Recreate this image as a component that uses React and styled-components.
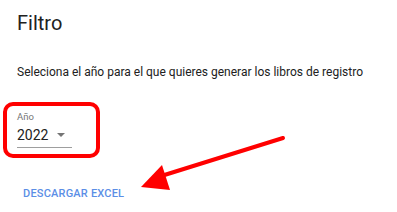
import React from "react";
import styled, { createGlobalStyle } from "styled-components";

const GlobalStyle = createGlobalStyle`
  html, body {
    margin: 0;
    padding: 0;
    background: #ffffff;
  }
  body {
    font-family: Roboto, "Liberation Sans", sans-serif;
  }
`;

const Page = styled.div`
  position: relative;
  width: 397px;
  height: 212px;
  overflow: hidden;
  box-sizing: border-box;
  padding: 12px 17px 0 17px;
  display: flex;
  flex-direction: column;
  font-family: Roboto, "Liberation Sans", sans-serif;
`;

const Title = styled.h2`
  margin: 0;
  font-size: 20px;
  font-weight: 400;
  line-height: 22px;
  color: #212121;
`;

const Description = styled.p`
  margin: 30px 0 0 0;
  font-size: 12px;
  line-height: 16px;
  color: #212121;
`;

const FieldWrap = styled.div`
  position: relative;
  margin-top: 31px;
  width: 55px;
`;

const Highlight = styled.div`
  position: absolute;
  left: -14px;
  top: -9px;
  width: 97px;
  height: 56px;
  box-sizing: border-box;
  border: 4px solid #ff0000;
  border-radius: 10px;
  pointer-events: none;
`;

const Label = styled.div`
  font-size: 9.5px;
  line-height: 12px;
  color: #757575;
`;

const SelectRow = styled.div`
  display: flex;
  align-items: center;
  justify-content: space-between;
  height: 25px;
  box-sizing: border-box;
  border-bottom: 1px solid #9e9e9e;
`;

const Value = styled.span`
  font-size: 14px;
  color: #212121;
`;

const Caret = styled.span`
  width: 0;
  height: 0;
  margin-right: 7px;
  border-left: 4px solid transparent;
  border-right: 4px solid transparent;
  border-top: 4px solid #757575;
`;

const DownloadButton = styled.button`
  align-self: flex-start;
  margin: 39px 0 0 6px;
  padding: 0;
  border: none;
  background: none;
  font-family: Roboto, "Liberation Sans", sans-serif;
  font-size: 11px;
  font-weight: 500;
  letter-spacing: 0.2px;
  color: #5b8ee6;
  text-transform: uppercase;
  cursor: pointer;
`;

const Arrow = styled.svg`
  position: absolute;
  left: 0;
  top: 0;
  pointer-events: none;
`;

export default function App() {
  return (
    <>
      <GlobalStyle />
      <Page>
        <Title>Filtro</Title>
        <Description>
          Seleciona el año para el que quieres generar los libros de registro
        </Description>
        <FieldWrap>
          <Label>Año</Label>
          <SelectRow>
            <Value>2022</Value>
            <Caret />
          </SelectRow>
          <Highlight />
        </FieldWrap>
        <DownloadButton>Descargar Excel</DownloadButton>
        <Arrow width="397" height="212" viewBox="0 0 397 212">
          <line x1="283" y1="138" x2="158" y2="177" stroke="#ff0000" strokeWidth="4" strokeLinecap="round" />
          <polygon points="141,187 162,165 170,190" fill="#ff0000" />
        </Arrow>
      </Page>
    </>
  );
}
